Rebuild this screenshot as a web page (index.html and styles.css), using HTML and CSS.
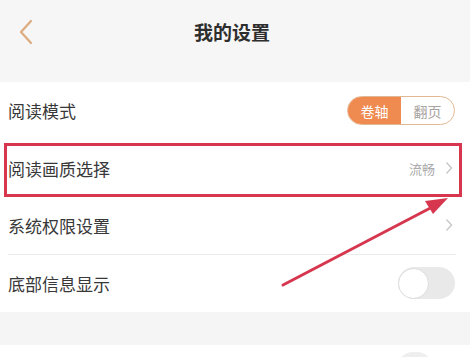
FILE: index.html
```html
<!DOCTYPE html>
<html lang="zh-CN">
<head>
    <meta charset="UTF-8">
    <meta name="viewport" content="width=device-width, initial-scale=1.0">
    <title>我的设置</title>
    <link rel="stylesheet" href="styles.css">
</head>
<body>

<div class="page">
    <div class="header">
        <svg class="back" width="16" height="26" viewBox="0 0 16 26">
            <path d="M13 2 L3 13 L13 24" fill="none" stroke="#dcab80" stroke-width="2.2" stroke-linecap="round" stroke-linejoin="round"/>
        </svg>
        <h2 class="title">我的设置</h2>
    </div>

    <div class="group">
        <div class="row">
            <span class="label">阅读模式</span>
            <div class="segment">
                <span class="seg active">卷轴</span>
                <span class="seg">翻页</span>
            </div>
        </div>
        <div class="row">
            <span class="label">阅读画质选择</span>
            <span class="value">流畅</span>
            <svg class="arrow-right" width="8" height="14" viewBox="0 0 8 14">
                <path d="M1.5 1.5 L6.5 7 L1.5 12.5" fill="none" stroke="#c8c8c8" stroke-width="1.4"/>
            </svg>
        </div>
        <div class="row line">
            <span class="label">系统权限设置</span>
            <svg class="arrow-right" width="8" height="14" viewBox="0 0 8 14">
                <path d="M1.5 1.5 L6.5 7 L1.5 12.5" fill="none" stroke="#c8c8c8" stroke-width="1.4"/>
            </svg>
        </div>
        <div class="row">
            <span class="label">底部信息显示</span>
            <div class="switch"><span class="knob"></span></div>
        </div>
    </div>

    <div class="gap"></div>

    <div class="group">
        <div class="row">
            <span class="label"></span>
            <div class="switch"><span class="knob"></span></div>
        </div>
    </div>

    <!-- annotation drawn over the screenshot -->
    <svg class="marks" width="470" height="357" viewBox="0 0 470 357">
        <rect x="5.5" y="144.5" width="455" height="51" fill="none" stroke="#d6374f" stroke-width="3"/>
        <line x1="283" y1="285" x2="438" y2="204" stroke="#d6374f" stroke-width="3" stroke-linecap="round"/>
        <polygon points="448,198 425,201 433,214" fill="#d6374f"/>
    </svg>
</div>

</body>
</html>
```

FILE: styles.css
```css
body {
    margin: 0;
    font-family: "Noto Sans CJK SC", "Noto Sans", sans-serif;
    background-color: #ffffff;
}
.page {
    position: relative;
    width: 470px;
    height: 357px;
    overflow: hidden;
}
.header {
    height: 82px;
    background-color: #f6f6f6;
    position: relative;
}
.back {
    position: absolute;
    left: 18px;
    top: 19px;
}
.title {
    margin: 0;
    padding-top: 19px;
    padding-right: 6px;
    text-align: center;
    font-size: 19px;
    line-height: 26px;
    font-weight: bold;
    color: #2e2e2e;
}
.group {
    background-color: white;
}
.row {
    height: 57.5px;
    display: flex;
    align-items: center;
    padding: 0 15px 0 8px;
    box-sizing: border-box;
}
.row.line {
    border-bottom: 1px solid #ececec;
    margin-right: 14px;
    margin-left: 8px;
    padding-left: 0;
    padding-right: 1px;
}
.label {
    flex: 1;
    font-size: 17px;
    color: #383838;
}
.value {
    font-size: 13px;
    color: #aaaaaa;
    margin-right: 10px;
}
.arrow-right {
    margin-right: 2px;
}
.segment {
    display: flex;
    width: 108px;
    height: 29px;
    border: 1.5px solid #e2b892;
    border-radius: 15px;
    overflow: hidden;
    box-sizing: border-box;
}
.seg {
    flex: 1;
    display: flex;
    align-items: center;
    justify-content: center;
    font-size: 14px;
    color: #a8a39e;
}
.seg.active {
    background-color: #ef8a50;
    color: white;
}
.switch {
    width: 57px;
    height: 32px;
    border-radius: 16px;
    background-color: #e9e9e9;
    display: flex;
    align-items: center;
}
.knob {
    width: 31px;
    height: 31px;
    border-radius: 50%;
    background-color: white;
    border: 1px solid #dddddd;
    box-sizing: border-box;
}
.gap {
    height: 33px;
    background-color: #f5f5f5;
}
.group:last-of-type .row {
    align-items: flex-start;
    padding-top: 7px;
}
.group:last-of-type .switch {
    margin-right: 22px;
    width: 36px;
    background-color: #eeeeee;
}
.group:last-of-type .knob {
    display: none;
}
.marks {
    position: absolute;
    left: 0;
    top: 0;
}
```
